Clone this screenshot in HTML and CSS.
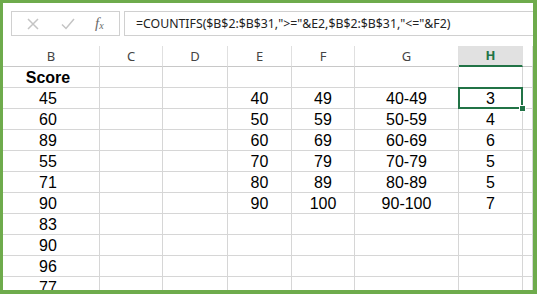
FILE: index.html
```html
<!DOCTYPE html>
<html lang="en">
<head>
    <meta charset="UTF-8">
    <meta name="viewport" content="width=device-width, initial-scale=1.0">
    <title>COUNTIFS</title>
    <link rel="stylesheet" href="styles.css">
</head>
<body>

<div class="frame">

    <!-- Formula bar -->
    <div class="formula-bar">
        <div class="buttons">
            <svg class="icon" width="12" height="12" viewBox="0 0 12 12">
                <path d="M1 1 L11 11 M11 1 L1 11" stroke="#c4c4c4" stroke-width="1.5" fill="none"/>
            </svg>
            <svg class="icon" width="14" height="12" viewBox="0 0 14 12">
                <path d="M1 6.5 L5 10.5 L13 1" stroke="#c4c4c4" stroke-width="1.5" fill="none"/>
            </svg>
            <span class="fx">f<sub>x</sub></span>
        </div>
        <div class="formula">=COUNTIFS($B$2:$B$31,"&gt;="&amp;E2,$B$2:$B$31,"&lt;="&amp;F2)</div>
    </div>

    <!-- Sheet -->
    <div class="sheet">
        <div class="head">B</div><div class="head">C</div><div class="head">D</div><div class="head">E</div>
        <div class="head">F</div><div class="head">G</div><div class="head active">H</div><div class="head"></div>

        <div class="cell b bold">Score</div><div class="cell"></div><div class="cell"></div><div class="cell"></div>
        <div class="cell"></div><div class="cell"></div><div class="cell"></div><div class="cell"></div>

        <div class="cell b">45</div><div class="cell"></div><div class="cell"></div><div class="cell">40</div>
        <div class="cell">49</div><div class="cell">40-49</div><div class="cell selected">3</div><div class="cell"></div>

        <div class="cell b">60</div><div class="cell"></div><div class="cell"></div><div class="cell">50</div>
        <div class="cell">59</div><div class="cell">50-59</div><div class="cell">4</div><div class="cell"></div>

        <div class="cell b">89</div><div class="cell"></div><div class="cell"></div><div class="cell">60</div>
        <div class="cell">69</div><div class="cell">60-69</div><div class="cell">6</div><div class="cell"></div>

        <div class="cell b">55</div><div class="cell"></div><div class="cell"></div><div class="cell">70</div>
        <div class="cell">79</div><div class="cell">70-79</div><div class="cell">5</div><div class="cell"></div>

        <div class="cell b">71</div><div class="cell"></div><div class="cell"></div><div class="cell">80</div>
        <div class="cell">89</div><div class="cell">80-89</div><div class="cell">5</div><div class="cell"></div>

        <div class="cell b">90</div><div class="cell"></div><div class="cell"></div><div class="cell">90</div>
        <div class="cell">100</div><div class="cell">90-100</div><div class="cell">7</div><div class="cell"></div>

        <div class="cell b">83</div><div class="cell"></div><div class="cell"></div><div class="cell"></div>
        <div class="cell"></div><div class="cell"></div><div class="cell"></div><div class="cell"></div>

        <div class="cell b">90</div><div class="cell"></div><div class="cell"></div><div class="cell"></div>
        <div class="cell"></div><div class="cell"></div><div class="cell"></div><div class="cell"></div>

        <div class="cell b">96</div><div class="cell"></div><div class="cell"></div><div class="cell"></div>
        <div class="cell"></div><div class="cell"></div><div class="cell"></div><div class="cell"></div>

        <div class="cell b">77</div><div class="cell"></div><div class="cell"></div><div class="cell"></div>
        <div class="cell"></div><div class="cell"></div><div class="cell"></div><div class="cell"></div>
    </div>

</div>

</body>
</html>
```

FILE: styles.css
```css
body {
    margin: 0;
    font-family: "Liberation Sans", Arial, sans-serif;
    background-color: #fff;
}

.frame {
    width: 537px;
    height: 294px;
    box-sizing: border-box;
    border-style: solid;
    border-color: #6eab4c;
    border-width: 3px 4px 4px 3px;
    overflow: hidden;
    background-color: #fff;
}

/* Formula bar */
.formula-bar {
    display: flex;
    height: 25px;
    margin: 8px 0 10px 8px;
    gap: 4px;
}

.buttons {
    width: 109px;
    box-sizing: border-box;
    border: 1px solid #d0d0d0;
    display: flex;
    align-items: center;
    padding-left: 15px;
}

.icon {
    display: block;
}

.buttons .icon + .icon {
    margin-left: 22px;
}

.fx {
    margin-left: 20px;
    font-family: "Liberation Serif", serif;
    font-style: italic;
    font-size: 15px;
    color: #6a6a6a;
    line-height: 1;
}

.fx sub {
    font-size: 10px;
    vertical-align: baseline;
    position: relative;
    top: 1px;
}

.formula {
    flex: 1;
    box-sizing: border-box;
    border: 1px solid #d0d0d0;
    border-right: none;
    padding-left: 11px;
    font-family: "Noto Sans", sans-serif;
    font-size: 12.3px;
    line-height: 23px;
    color: #222;
    white-space: nowrap;
}

/* Sheet grid */
.sheet {
    display: grid;
    grid-template-columns: 97px 63px 65px 64px 63px 104px 64px 10px;
    grid-auto-rows: 21px;
}

.head, .cell {
    box-sizing: border-box;
    border-right: 1px solid #d6d6d6;
    border-bottom: 1px solid #d6d6d6;
    text-align: center;
}

.head {
    font-family: "Noto Sans", sans-serif;
    font-size: 13px;
    line-height: 20px;
    color: #444;
    border-right-color: #e0e0e0;
    border-bottom-color: #c8c8c8;
}

.head.active {
    background-color: #e1e1e1;
    color: #217346;
    font-weight: bold;
    border-bottom: 2px solid #217346;
    line-height: 19px;
}

.cell {
    font-size: 16px;
    line-height: 21px;
    color: #000;
}

.cell.b {
    padding-right: 6px;
}

.bold {
    font-weight: bold;
}

.selected {
    position: relative;
}

.selected::before {
    content: "";
    position: absolute;
    top: -1px;
    left: -1px;
    right: -1px;
    bottom: -1px;
    border: 2px solid #217346;
}

.selected::after {
    content: "";
    position: absolute;
    right: -4px;
    bottom: -4px;
    width: 5px;
    height: 5px;
    background-color: #217346;
    border: 1px solid #fff;
}
```
